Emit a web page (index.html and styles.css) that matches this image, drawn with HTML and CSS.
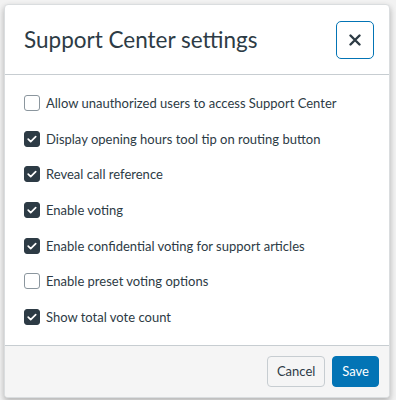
FILE: index.html
```html
<!DOCTYPE html>
<html>
<head>
  <title>Support Center settings</title>
  <link rel="stylesheet" href="styles.css">
</head>
<body>
  <div class="backdrop">
    <div class="modal">
      <div class="modal-header">
        <h1>Support Center settings</h1>
        <button class="close-btn" aria-label="Close">
          <svg width="12" height="12" viewBox="0 0 12 12"><path d="M1.5 1.5L10.5 10.5M10.5 1.5L1.5 10.5" stroke="#2d3b45" stroke-width="2.4" stroke-linecap="round"/></svg>
        </button>
      </div>

      <div class="modal-body">
        <label class="option"><span class="box"></span>Allow unauthorized users to access Support Center</label>
        <label class="option"><span class="box checked"></span>Display opening hours tool tip on routing button</label>
        <label class="option"><span class="box checked"></span>Reveal call reference</label>
        <label class="option"><span class="box checked"></span>Enable voting</label>
        <label class="option"><span class="box checked"></span>Enable confidential voting for support articles</label>
        <label class="option"><span class="box"></span>Enable preset voting options</label>
        <label class="option"><span class="box checked"></span>Show total vote count</label>
      </div>

      <div class="modal-footer">
        <button class="btn btn-secondary">Cancel</button>
        <button class="btn btn-primary">Save</button>
      </div>
    </div>
  </div>
</body>
</html>
```

FILE: styles.css
```css
body {
  margin: 0;
  background: #f2f2f2;
  font-family: Lato, 'Liberation Sans', Arial, sans-serif;
  color: #2d3b45;
}
.backdrop {
  padding: 4px 6px 5px 4px;
}
.modal {
  background: #fff;
  border: 1px solid #dadddf;
  border-radius: 4px;
  box-shadow: 0 3px 6px rgba(0, 0, 0, 0.12), 0 3px 6px rgba(0, 0, 0, 0.16);
  overflow: hidden;
}
.modal-header {
  height: 69px;
  display: flex;
  align-items: center;
  justify-content: space-between;
  padding: 0 15px 0 19px;
  border-bottom: 1px solid #c7cdd1;
}
.modal-header h1 {
  margin: 0;
  font-size: 22.5px;
  font-weight: 400;
  color: #2d3b45;
}
.close-btn {
  width: 38px;
  height: 38px;
  border: 1px solid #0374b5;
  border-radius: 5px;
  background: #fff;
  display: flex;
  align-items: center;
  justify-content: center;
  padding: 0;
}
.modal-body {
  padding: 10px 19px 10px 19px;
  display: flex;
  flex-direction: column;
}
.option {
  display: flex;
  align-items: center;
  gap: 6px;
  height: 35.7px;
  font-size: 13px;
}
.box {
  width: 14px;
  height: 14px;
  border: 1px solid #8b969e;
  border-radius: 3px;
  background: #fff;
  flex: none;
}
.box.checked {
  background: #2d3b45 url("data:image/svg+xml,%3Csvg xmlns='http://www.w3.org/2000/svg' viewBox='0 0 16 16'%3E%3Cpath d='M4.2 8.2l2.5 2.5 5-5' fill='none' stroke='white' stroke-width='1.7' stroke-linecap='round' stroke-linejoin='round'/%3E%3C/svg%3E") center / 16px 16px no-repeat;
  border-color: #2d3b45;
}
.modal-footer {
  background: #f5f5f5;
  border-top: 1px solid #c7cdd1;
  display: flex;
  justify-content: flex-end;
  gap: 7px;
  padding: 10px 10px 10px 0;
}
.btn {
  font-family: inherit;
  font-size: 13px;
  height: 31px;
  border-radius: 4px;
  padding: 0 9px;
}
.btn-secondary {
  background: #f5f5f5;
  border: 1px solid #c7cdd1;
  color: #2d3b45;
}
.btn-primary {
  background: #0374b5;
  border: 1px solid #0374b5;
  color: #fff;
}
```
